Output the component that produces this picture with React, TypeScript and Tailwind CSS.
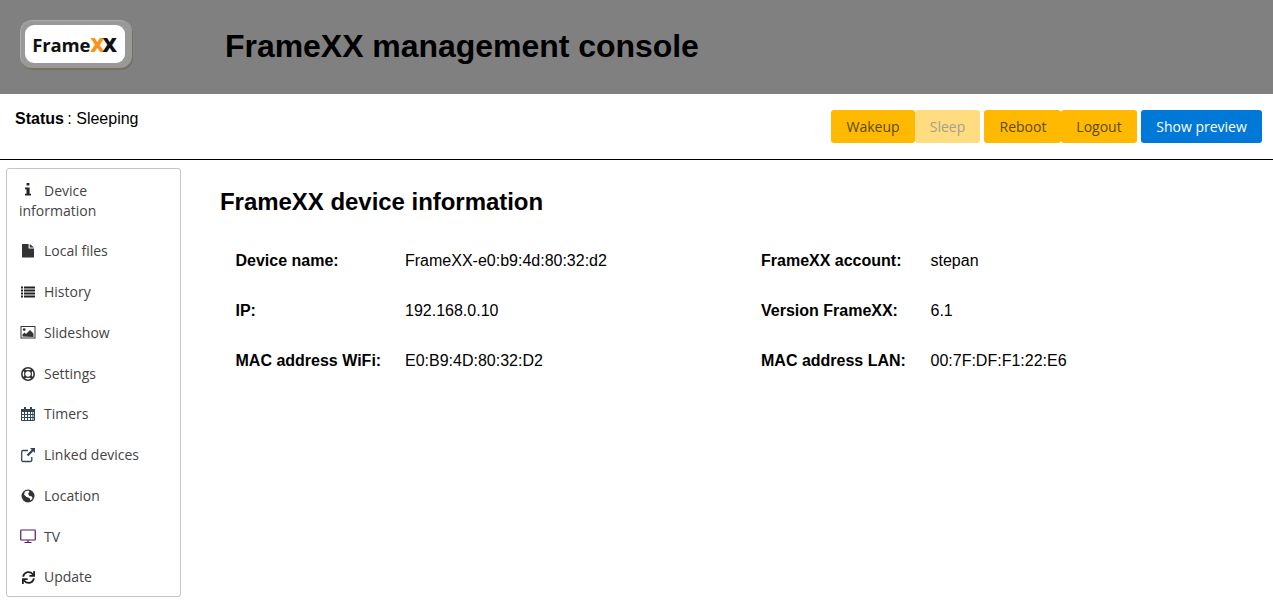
import { FaSync } from 'react-icons/fa';
import type { ReactNode } from 'react';

// 16x16 drawings, closer to the old icon font than the packaged sets
function Icon({ children, className }: { children: ReactNode; className: string }) {
  return (
    <svg viewBox="0 0 16 16" className={`h-4 w-4 ${className}`}>
      {children}
    </svg>
  );
}

const menu: { label: string; icon: ReactNode }[] = [
  {
    label: 'Local files',
    icon: (
      <Icon className="text-[#333]">
        <path fill="currentColor" d="M2 1h6.6v4.6H14V14.5H2zM9.8 1L14 4.6H9.8z" />
      </Icon>
    ),
  },
  {
    label: 'History',
    icon: (
      <Icon className="text-[#222]">
        <path
          fill="currentColor"
          d="M1 2.5h2v2H1zM4 2.5h11v2H4zM1 5.5h2v2H1zM4 5.5h11v2H4zM1 8.5h2v2H1zM4 8.5h11v2H4zM1 11.5h2v2H1zM4 11.5h11v2H4z"
        />
      </Icon>
    ),
  },
  {
    label: 'Slideshow',
    icon: (
      <Icon className="text-[#333]">
        <rect x="1" y="1.5" width="14" height="11.5" fill="none" stroke="currentColor" />
        <circle cx="4.2" cy="4.6" r="1.4" fill="currentColor" />
        <path fill="currentColor" d="M2.5 11.5V9.5l2-2 1.5 1.5 4-4 3.5 3.5v3.5z" />
      </Icon>
    ),
  },
  {
    label: 'Settings',
    icon: (
      <Icon className="text-[#333]">
        <circle cx="8" cy="8" r="6.2" fill="none" stroke="currentColor" strokeWidth="1.6" />
        <circle cx="8" cy="8" r="3.4" fill="none" stroke="currentColor" strokeWidth="1.2" />
        <path stroke="currentColor" strokeWidth="2.6" d="M3.6 3.6l2.2 2.2M12.4 3.6l-2.2 2.2M3.6 12.4l2.2-2.2M12.4 12.4l-2.2-2.2" />
      </Icon>
    ),
  },
  {
    label: 'Timers',
    icon: (
      <Icon className="text-[#345]">
        <path fill="currentColor" d="M1 3h3V1h2v2h4V1h2v2h3v3H1z" />
        <path
          fill="none"
          stroke="currentColor"
          d="M1.5 5.5v9h13v-9M1.5 8.5h13M1.5 11.5h13M4.5 5.5v9M7.5 5.5v9M10.5 5.5v9M12.9 5.5v9"
        />
      </Icon>
    ),
  },
  {
    label: 'Linked devices',
    icon: (
      <Icon className="text-[#345]">
        <path fill="none" stroke="currentColor" strokeWidth="1.3" d="M8 3.5H3a1.3 1.3 0 0 0-1.3 1.3v8.4A1.3 1.3 0 0 0 3 14.5h7.5a1.3 1.3 0 0 0 1.3-1.3V10" />
        <path fill="currentColor" d="M10 1h5v5l-1.7-1.7-5 5-1.6-1.6 5-5z" />
      </Icon>
    ),
  },
  {
    label: 'Location',
    icon: (
      <Icon className="text-[#333]">
        <circle cx="8" cy="8" r="6.5" fill="currentColor" />
        <path fill="white" d="M5 3.5l3.5-1 1 1.5-1.5 1.5 1.5 2.5 2.5.5.5 2-2 2-1-2.5-3-1-2.5-2.5z" />
      </Icon>
    ),
  },
  {
    label: 'TV',
    icon: (
      <Icon className="text-[#551a66]">
        <rect x="0.75" y="1" width="14.5" height="10" rx="0.5" fill="none" stroke="currentColor" strokeWidth="1.2" />
        <path fill="none" stroke="currentColor" strokeWidth="1.2" d="M8 11v2.5M4.5 13.5h7" />
      </Icon>
    ),
  },
  {
    label: 'Update',
    icon: (
      <span className="flex w-4 justify-center">
        <FaSync className="h-[13px] w-[13px] text-[#222]" />
      </span>
    ),
  },
];

const info = [
  ['Device name:', 'FrameXX-e0:b9:4d:80:32:d2', 'FrameXX account:', 'stepan'],
  ['IP:', '192.168.0.10', 'Version FrameXX:', '6.1'],
  ['MAC address WiFi:', 'E0:B9:4D:80:32:D2', 'MAC address LAN:', '00:7F:DF:F1:22:E6'],
];

function Logo() {
  return (
    <div className="h-[48px] w-[112px] rounded-[12px] border-t border-l border-[#aaa] bg-[#999] pt-[4px] pl-[4px] shadow-[1px_2px_0_#77705f]">
      <div className="flex h-[38px] w-[100px] items-center justify-center rounded-[9px] bg-white pt-[1px] pr-[1px] font-['Open_Sans',sans-serif] text-[18.5px] font-bold tracking-[-0.2px] text-[#111]">
        Frame
        <span className="text-[20px] font-extrabold text-[#f7941d]">X</span>
        <span className="-ml-[2px] text-[20px] font-extrabold">X</span>
      </div>
    </div>
  );
}

function ActionButton({ label, className }: { label: string; className: string }) {
  return <button className={`h-[33px] rounded-[3px] text-[14px] ${className}`}>{label}</button>;
}

export default function App() {
  return (
    <div className="min-h-[610px] bg-white font-['Liberation_Sans',sans-serif] text-black">
      <header className="flex h-[94px] bg-[#808080] pt-[20px] pl-[20px]">
        <Logo />
        <h1 className="mt-[7px] ml-[93px] text-[32px] leading-[38px] font-bold tracking-[-0.04px]">
          FrameXX management console
        </h1>
      </header>

      <div className="flex h-[66px] justify-between border-b border-black pr-[11px] pl-[15px]">
        <div className="pt-[16px] text-[16px] leading-[18px]">
          <b>Status</b>
          <span className="-ml-px"> : Sleeping</span>
        </div>
        <div className="flex pt-[16px] font-['Open_Sans',sans-serif]">
          <ActionButton label="Wakeup" className="w-[84px] bg-[#ffb900] text-[#5c4a14]" />
          <ActionButton label="Sleep" className="w-[65px] bg-[#ffdc80] text-[#a8a08a]" />
          <ActionButton label="Reboot" className="ml-[4px] w-[77px] bg-[#ffb900] pl-[1px] text-[#5c4a14]" />
          <ActionButton label="Logout" className="w-[76px] bg-[#ffb900] text-[#5c4a14]" />
          <ActionButton label="Show preview" className="ml-[4px] w-[121px] bg-[#0078d7] text-white" />
        </div>
      </div>

      <div className="flex items-start pt-[8px] pl-[6px]">
        <nav className="h-[429px] w-[175px] rounded-[3px] border border-[#c4c4c4] pt-[12px] pl-[12px] font-['Open_Sans',sans-serif] text-[14px] leading-[20px] text-[#444]">
          <div className="mb-[20.25px] w-[120px]">
            <span className="inline-block w-[25px] pl-[1px] align-[-2px]">
              <Icon className="text-[#222]">
                <path fill="currentColor" d="M6.6 1h2.8v2.6H6.6zM5 5.5h4.6v6.2H11v1.8H5v-1.8h1.5V7.3H5z" />
              </Icon>
            </span>
            Device information
          </div>
          {menu.map((item) => (
            <div key={item.label} className="mb-[20.75px] flex h-[20px] items-center">
              <span className="w-[25px] pl-[1px]">{item.icon}</span>
              {item.label}
            </div>
          ))}
        </nav>

        <main className="pt-[20px] pl-[39px]">
          <h2 className="text-[24px] leading-[28px] font-bold tracking-[-0.04px]">FrameXX device information</h2>
          <div className="mt-[36px] flex flex-col gap-[32px] pl-[15.5px] text-[16px] leading-[18px]">
            {info.map((row) => (
              <div key={row[0]} className="flex">
                <b className="w-[169.5px]">{row[0]}</b>
                <span className="w-[356px]">{row[1]}</span>
                <b className="w-[169.5px]">{row[2]}</b>
                <span>{row[3]}</span>
              </div>
            ))}
          </div>
        </main>
      </div>
    </div>
  );
}
